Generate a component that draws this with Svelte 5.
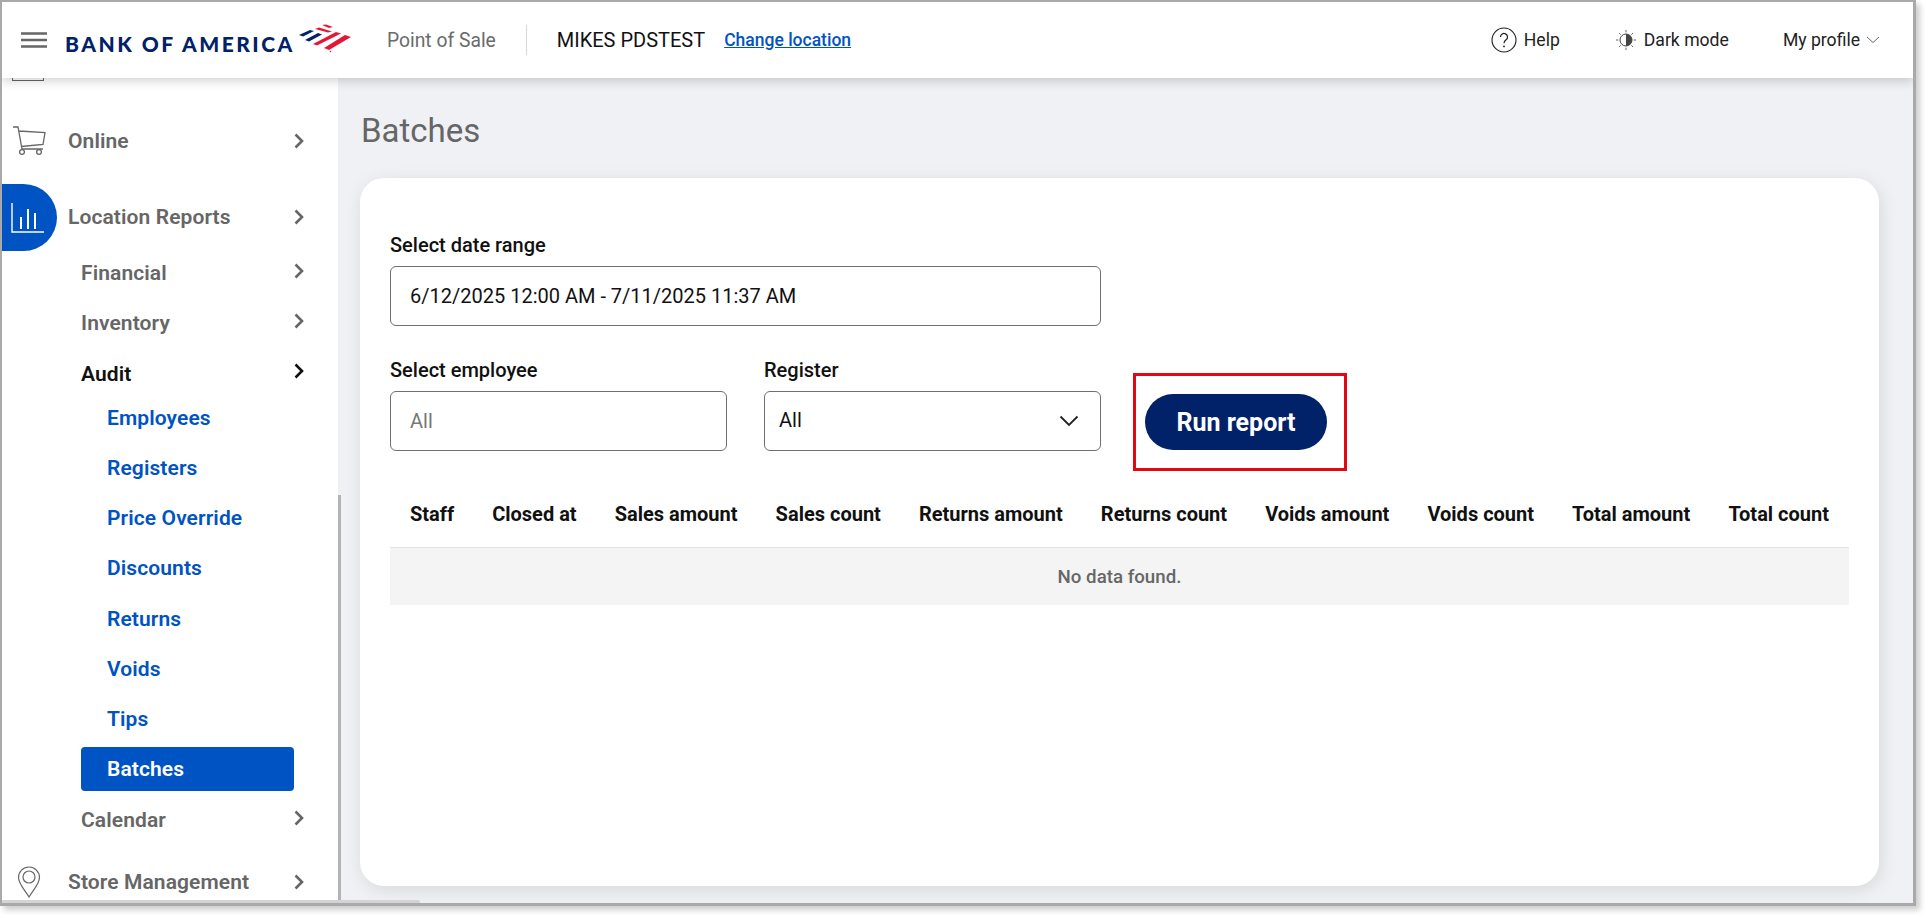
<script lang="ts">
	const upperSubs = ['Financial', 'Inventory'];
	const auditLinks = ['Employees', 'Registers', 'Price Override', 'Discounts', 'Returns', 'Voids', 'Tips'];
	const columns = [
		'Staff',
		'Closed at',
		'Sales amount',
		'Sales count',
		'Returns amount',
		'Returns count',
		'Voids amount',
		'Voids count',
		'Total amount',
		'Total count'
	];
</script>

<div class="shot">
	<div class="frame">
		<header class="topbar">
			<svg class="burger" viewBox="0 0 26 16" aria-hidden="true">
				<path d="M0 1.500h26M0 8h26M0 14.500h26" stroke="#666" stroke-width="2.400" />
			</svg>
			<div class="logo">
				<span class="logo-text">BANK OF AMERICA</span>
				<svg class="flag" viewBox="0 0 62 38" aria-hidden="true">
					<path d="M27 5l4-.6 7 2.600-4 1z" fill="#e31837" />
					<path d="M20 9l4-1.500 13 4-4 1z" fill="#e31837" />
					<path d="M4 15l11-5 4 1-11 5.500z" fill="#012169" />
					<path d="M10 20l13-7 4 1.500-13 7z" fill="#012169" />
					<path d="M18 24l23-12 5 1.500-24 12z" fill="#e31837" />
					<path d="M29 28l21-13 6 2-22 13z" fill="#e31837" />
					<circle cx="35.500" cy="31.500" r="0.800" fill="#e31837" />
				</svg>
			</div>
			<span class="pos">Point of Sale</span>
			<span class="divider"></span>
			<span class="store">MIKES PDSTEST</span>
			<a class="change" href="#top">Change location</a>
			<div class="top-right">
				<span class="top-item help">
					<svg viewBox="0 0 26 26" width="26" height="26" aria-hidden="true">
						<circle cx="13" cy="13" r="12" fill="none" stroke="#222" stroke-width="1.100" />
						<path d="M9.500 10a3.500 3.500 0 1 1 5.600 2.800c-1.300 1-2.100 1.700-2.100 3.400" fill="none" stroke="#222" stroke-width="1.200" />
						<circle cx="13" cy="19.400" r="0.900" fill="#222" />
					</svg>
					Help
				</span>
				<span class="top-item dark">
					<svg viewBox="0 0 22 22" width="22" height="22" aria-hidden="true">
						<circle cx="11" cy="11" r="6" fill="none" stroke="#444" stroke-width="1" />
						<path d="M11 5a6 6 0 0 1 0 12z" fill="#444" />
						<path d="M11 1v2.400M11 18.600V21M1 11h2.400M18.600 11H21M4 4l1.600 1.600M16.400 16.400L18 18M4 18l1.600-1.600M16.400 5.600L18 4" stroke="#666" stroke-width="1" />
					</svg>
					Dark mode
				</span>
				<span class="top-item profile">
					My profile
					<svg viewBox="0 0 14 8" width="14" height="8" aria-hidden="true">
						<path d="M1 1l6 5.500L13 1" fill="none" stroke="#666" stroke-width="1" />
					</svg>
				</span>
			</div>
		</header>

		<div class="body">
			<nav class="sidebar">
				<div class="clipped-icon"></div>
				<div class="nav-top online">
					<svg class="nav-icon" viewBox="0 0 34 30" aria-hidden="true">
						<path d="M1 1h5l4 22h21M7 5l26 1.500-2 12-22 2" fill="none" stroke="#666" stroke-width="1.300" />
						<circle cx="10" cy="26" r="2.400" fill="none" stroke="#666" stroke-width="1.300" />
						<circle cx="27" cy="26" r="2.400" fill="none" stroke="#666" stroke-width="1.300" />
					</svg>
					<span>Online</span>
					<svg class="chev" viewBox="0 0 10 16" aria-hidden="true"><path d="M1.500 1.500L8 8l-6.500 6.500" /></svg>
				</div>
				<div class="nav-top reports">
					<span class="pill">
						<svg viewBox="0 0 34 30" width="34" height="30" aria-hidden="true">
							<path d="M1 0v29h32" fill="none" stroke="#fff" stroke-width="1.400" />
							<path d="M10 14v12M17 6v20M24 10v16" stroke="#fff" stroke-width="2" />
						</svg>
					</span>
					<span class="reports-label">Location Reports</span>
					<svg class="chev" viewBox="0 0 10 16" aria-hidden="true"><path d="M1.500 1.500L8 8l-6.500 6.500" /></svg>
				</div>
				{#each upperSubs as label}
					<div class="nav-sub">
						<span>{label}</span>
						<svg class="chev" viewBox="0 0 10 16" aria-hidden="true"><path d="M1.500 1.500L8 8l-6.500 6.500" /></svg>
					</div>
				{/each}
				<div class="nav-sub audit">
					<span>Audit</span>
					<svg class="chev" viewBox="0 0 10 16" aria-hidden="true"><path d="M1.500 1.500L8 8l-6.500 6.500" /></svg>
				</div>
				{#each auditLinks as link}
					<a class="nav-link" href="#top">{link}</a>
				{/each}
				<a class="nav-link active" href="#top">Batches</a>
				<div class="nav-sub calendar">
					<span>Calendar</span>
					<svg class="chev" viewBox="0 0 10 16" aria-hidden="true"><path d="M1.500 1.500L8 8l-6.500 6.500" /></svg>
				</div>
				<div class="nav-top store-mgmt">
					<svg class="nav-icon pin" viewBox="0 0 24 32" aria-hidden="true">
						<path d="M12 31C8 24 1.500 18 1.500 11.500a10.500 10.500 0 0 1 21 0C22.500 18 16 24 12 31z" fill="none" stroke="#666" stroke-width="1.200" />
						<circle cx="12" cy="11" r="6" fill="none" stroke="#666" stroke-width="1.200" />
					</svg>
					<span>Store Management</span>
					<svg class="chev" viewBox="0 0 10 16" aria-hidden="true"><path d="M1.500 1.500L8 8l-6.500 6.500" /></svg>
				</div>
			</nav>

			<main class="main">
				<h1>Batches</h1>
				<section class="card">
					<div class="field date">
						<span class="field-label">Select date range</span>
						<span class="box">6/12/2025 12:00 AM - 7/11/2025 11:37 AM</span>
					</div>
					<div class="filters">
						<div class="field employee">
							<span class="field-label">Select employee</span>
							<span class="box placeholder">All</span>
						</div>
						<div class="field register">
							<span class="field-label">Register</span>
							<span class="box select">
								<span class="select-value">All</span>
								<svg viewBox="0 0 20 12" width="20" height="12" aria-hidden="true">
									<path d="M1.500 1.500L10 10l8.500-8.500" fill="none" stroke="#222" stroke-width="1.800" />
								</svg>
							</span>
						</div>
						<div class="run-wrap">
							<button class="run" type="button">Run report</button>
						</div>
					</div>
					<div class="thead">
						{#each columns as col}
							<span>{col}</span>
						{/each}
					</div>
					<div class="empty">No data found.</div>
				</section>
			</main>
			<div class="scroll-thumb"></div>
			<div class="h-thumb"></div>
		</div>
	</div>
</div>

<style>
	:global(body) {
		margin: 0;
		background: #fff;
		font-family: Roboto, 'Liberation Sans', sans-serif;
	}
	.shot {
		width: 1928px;
		height: 918px;
		overflow: hidden;
	}
	.frame {
		width: 1916px;
		height: 906px;
		box-sizing: border-box;
		border: 2px solid #a9a9a9;
		border-right-width: 3px;
		border-bottom-width: 3px;
		box-shadow: 4px 4px 6px rgba(0, 0, 0, 0.2);
		background: #f0f1f5;
		display: flex;
		flex-direction: column;
		overflow: hidden;
	}
	.topbar {
		height: 76px;
		flex: none;
		display: flex;
		align-items: center;
		background: #fff;
		box-shadow: 0 3px 10px rgba(0, 0, 0, 0.18);
		position: relative;
		z-index: 2;
		padding-left: 19px;
		box-sizing: border-box;
	}
	.burger {
		width: 26px;
		height: 16px;
		flex: none;
	}
	.logo {
		display: flex;
		align-items: center;
		margin-left: 18px;
		width: 289px;
		flex: none;
	}
	.logo-text {
		font-family: Lato, Roboto, sans-serif;
		font-weight: 900;
		font-size: 21px;
		letter-spacing: 2.500px;
		color: #012169;
		margin-top: 7px;
		white-space: nowrap;
	}
	.flag {
		width: 62px;
		height: 38px;
		margin-top: -2px;
		flex: none;
	}
	.pos {
		font-size: 19.300px;
		color: #6b6b6b;
		margin-left: 33px;
		white-space: nowrap;
	}
	.divider {
		width: 1px;
		height: 30px;
		background: #d8d8d8;
		margin-left: 30px;
	}
	.store {
		font-size: 20px;
		color: #111;
		margin-left: 30px;
		white-space: nowrap;
	}
	.change {
		font-size: 17.500px;
		font-weight: 500;
		color: #0053c2;
		margin-left: 19px;
		white-space: nowrap;
	}
	.top-right {
		margin-left: auto;
		display: flex;
		align-items: center;
		padding-right: 33px;
	}
	.top-item {
		display: flex;
		align-items: center;
		gap: 7px;
		font-size: 17.600px;
		color: #222;
		white-space: nowrap;
	}
	.dark {
		margin-left: 55px;
	}
	.profile {
		margin-left: 54px;
		gap: 6px;
	}
	.body {
		flex: 1;
		display: flex;
		min-height: 0;
		position: relative;
	}
	.sidebar {
		width: 336px;
		flex: none;
		background: #fff;
		overflow: hidden;
		display: flex;
		flex-direction: column;
		align-items: stretch;
		box-sizing: border-box;
		padding-right: 34px;
	}
	.clipped-icon {
		flex: none;
		height: 3px;
		width: 32px;
		margin-left: 10px;
		border: 1px solid #666;
		border-top: 0;
		box-sizing: border-box;
	}
	.nav-top,
	.nav-sub {
		display: flex;
		align-items: center;
		flex: none;
		font-size: 21px;
		font-weight: 600;
		color: #666;
		letter-spacing: 0.1px;
		height: 44px;
		white-space: nowrap;
	}
	.nav-icon {
		flex: none;
		width: 34px;
		height: 30px;
		margin: 0 22px 0 10px;
	}
	.pin {
		width: 24px;
		height: 32px;
		margin: 0 27px 0 15px;
	}
	.online {
		margin-top: 38px;
	}
	.reports {
		margin-top: 21px;
		height: 67px;
	}
	.reports-label {
		margin-bottom: 2px;
	}
	.reports .chev {
		margin-bottom: 2px;
	}
	.store-mgmt {
		margin-top: 11.400px;
	}
	.pill {
		flex: none;
		width: 55px;
		height: 67px;
		margin-right: 11px;
		border-radius: 0 34px 34px 0;
		background: #0053c2;
		display: flex;
		align-items: center;
		justify-content: center;
		padding-right: 4px;
		box-sizing: border-box;
	}
	.chev {
		width: 10px;
		height: 16px;
		fill: none;
		stroke: #666;
		stroke-width: 2.600;
		margin-left: auto;
		flex: none;
	}
	.nav-sub {
		margin-left: 79px;
		margin-bottom: 6.300px;
	}
	.nav-sub .chev {
		transform: translateY(-2px);
	}
	.audit {
		color: #111;
		margin-bottom: 0;
	}
	.audit .chev {
		stroke: #111;
		transform: translateY(-3px);
	}
	.nav-link {
		display: block;
		flex: none;
		font-size: 21px;
		font-weight: 600;
		color: #0053c2;
		text-decoration: none;
		letter-spacing: 0.1px;
		margin-left: 79px;
		width: 213px;
		height: 44px;
		line-height: 44px;
		padding-left: 26px;
		box-sizing: border-box;
		margin-bottom: 6.300px;
	}
	.active {
		background: #0053c2;
		color: #fff;
		border-radius: 4px;
		margin-top: -1px;
		margin-bottom: 7.300px;
	}
	.scroll-thumb {
		position: absolute;
		left: 336px;
		top: 417px;
		bottom: 0;
		width: 3px;
		background: #b4b4b4;
	}
	.h-thumb {
		position: absolute;
		left: 0;
		bottom: 0;
		width: 418px;
		height: 3px;
		background: #d4d4d4;
		border-radius: 0 2px 0 0;
	}
	.main {
		flex: 1;
		min-width: 0;
		padding: 0 28px 0 23px;
	}
	h1 {
		margin: 0;
		font-size: 33px;
		font-weight: 400;
		color: #666;
		padding-top: 32px;
		line-height: 42px;
	}
	.card {
		margin-top: 26px;
		margin-left: -1px;
		width: 1519px;
		height: 708px;
		background: #fff;
		border-radius: 24px;
		box-shadow: 2px 4px 18px rgba(0, 0, 0, 0.1);
		padding: 55px 30px 0;
		box-sizing: border-box;
	}
	.field {
		display: block;
	}
	.field-label {
		display: block;
		font-size: 20px;
		font-weight: 500;
		color: #111;
		line-height: 24px;
		margin-bottom: 9px;
		white-space: nowrap;
	}
	.box {
		display: flex;
		align-items: center;
		box-sizing: border-box;
		height: 60px;
		border: 1px solid #6f6f6f;
		border-radius: 6px;
		padding: 0 19px;
		font-size: 20px;
		color: #111;
	}
	.date {
		width: 711px;
	}
	.filters {
		display: flex;
		margin-top: 32px;
	}
	.employee {
		width: 337px;
	}
	.register {
		width: 337px;
		margin-left: 37px;
	}
	.placeholder {
		color: #777;
	}
	.select {
		padding: 0 21px 0 14px;
		justify-content: space-between;
	}
	.select-value {
		margin-bottom: 2px;
	}
	.run-wrap {
		margin-left: 32px;
		box-sizing: border-box;
		width: 214px;
		height: 98px;
		border: 3px solid #e30613;
		padding: 18px 0 0 9px;
		margin-top: 15px;
		flex: none;
	}
	.run {
		width: 182px;
		height: 56px;
		border: 0;
		border-radius: 28px;
		background: #012169;
		color: #fff;
		font-family: inherit;
		font-size: 25px;
		font-weight: 700;
		padding: 0;
	}
	.thead {
		display: flex;
		justify-content: space-between;
		padding: 9px 20px 0;
		height: 77px;
		align-items: center;
		font-size: 20px;
		font-weight: 700;
		color: #111;
		border-bottom: 1px solid #e3e3e3;
		box-sizing: border-box;
		white-space: nowrap;
	}
	.empty {
		height: 57px;
		background: #f4f4f4;
		display: flex;
		align-items: center;
		justify-content: center;
		font-size: 18.700px;
		font-weight: 500;
		color: #666;
		box-sizing: border-box;
	}
</style>
